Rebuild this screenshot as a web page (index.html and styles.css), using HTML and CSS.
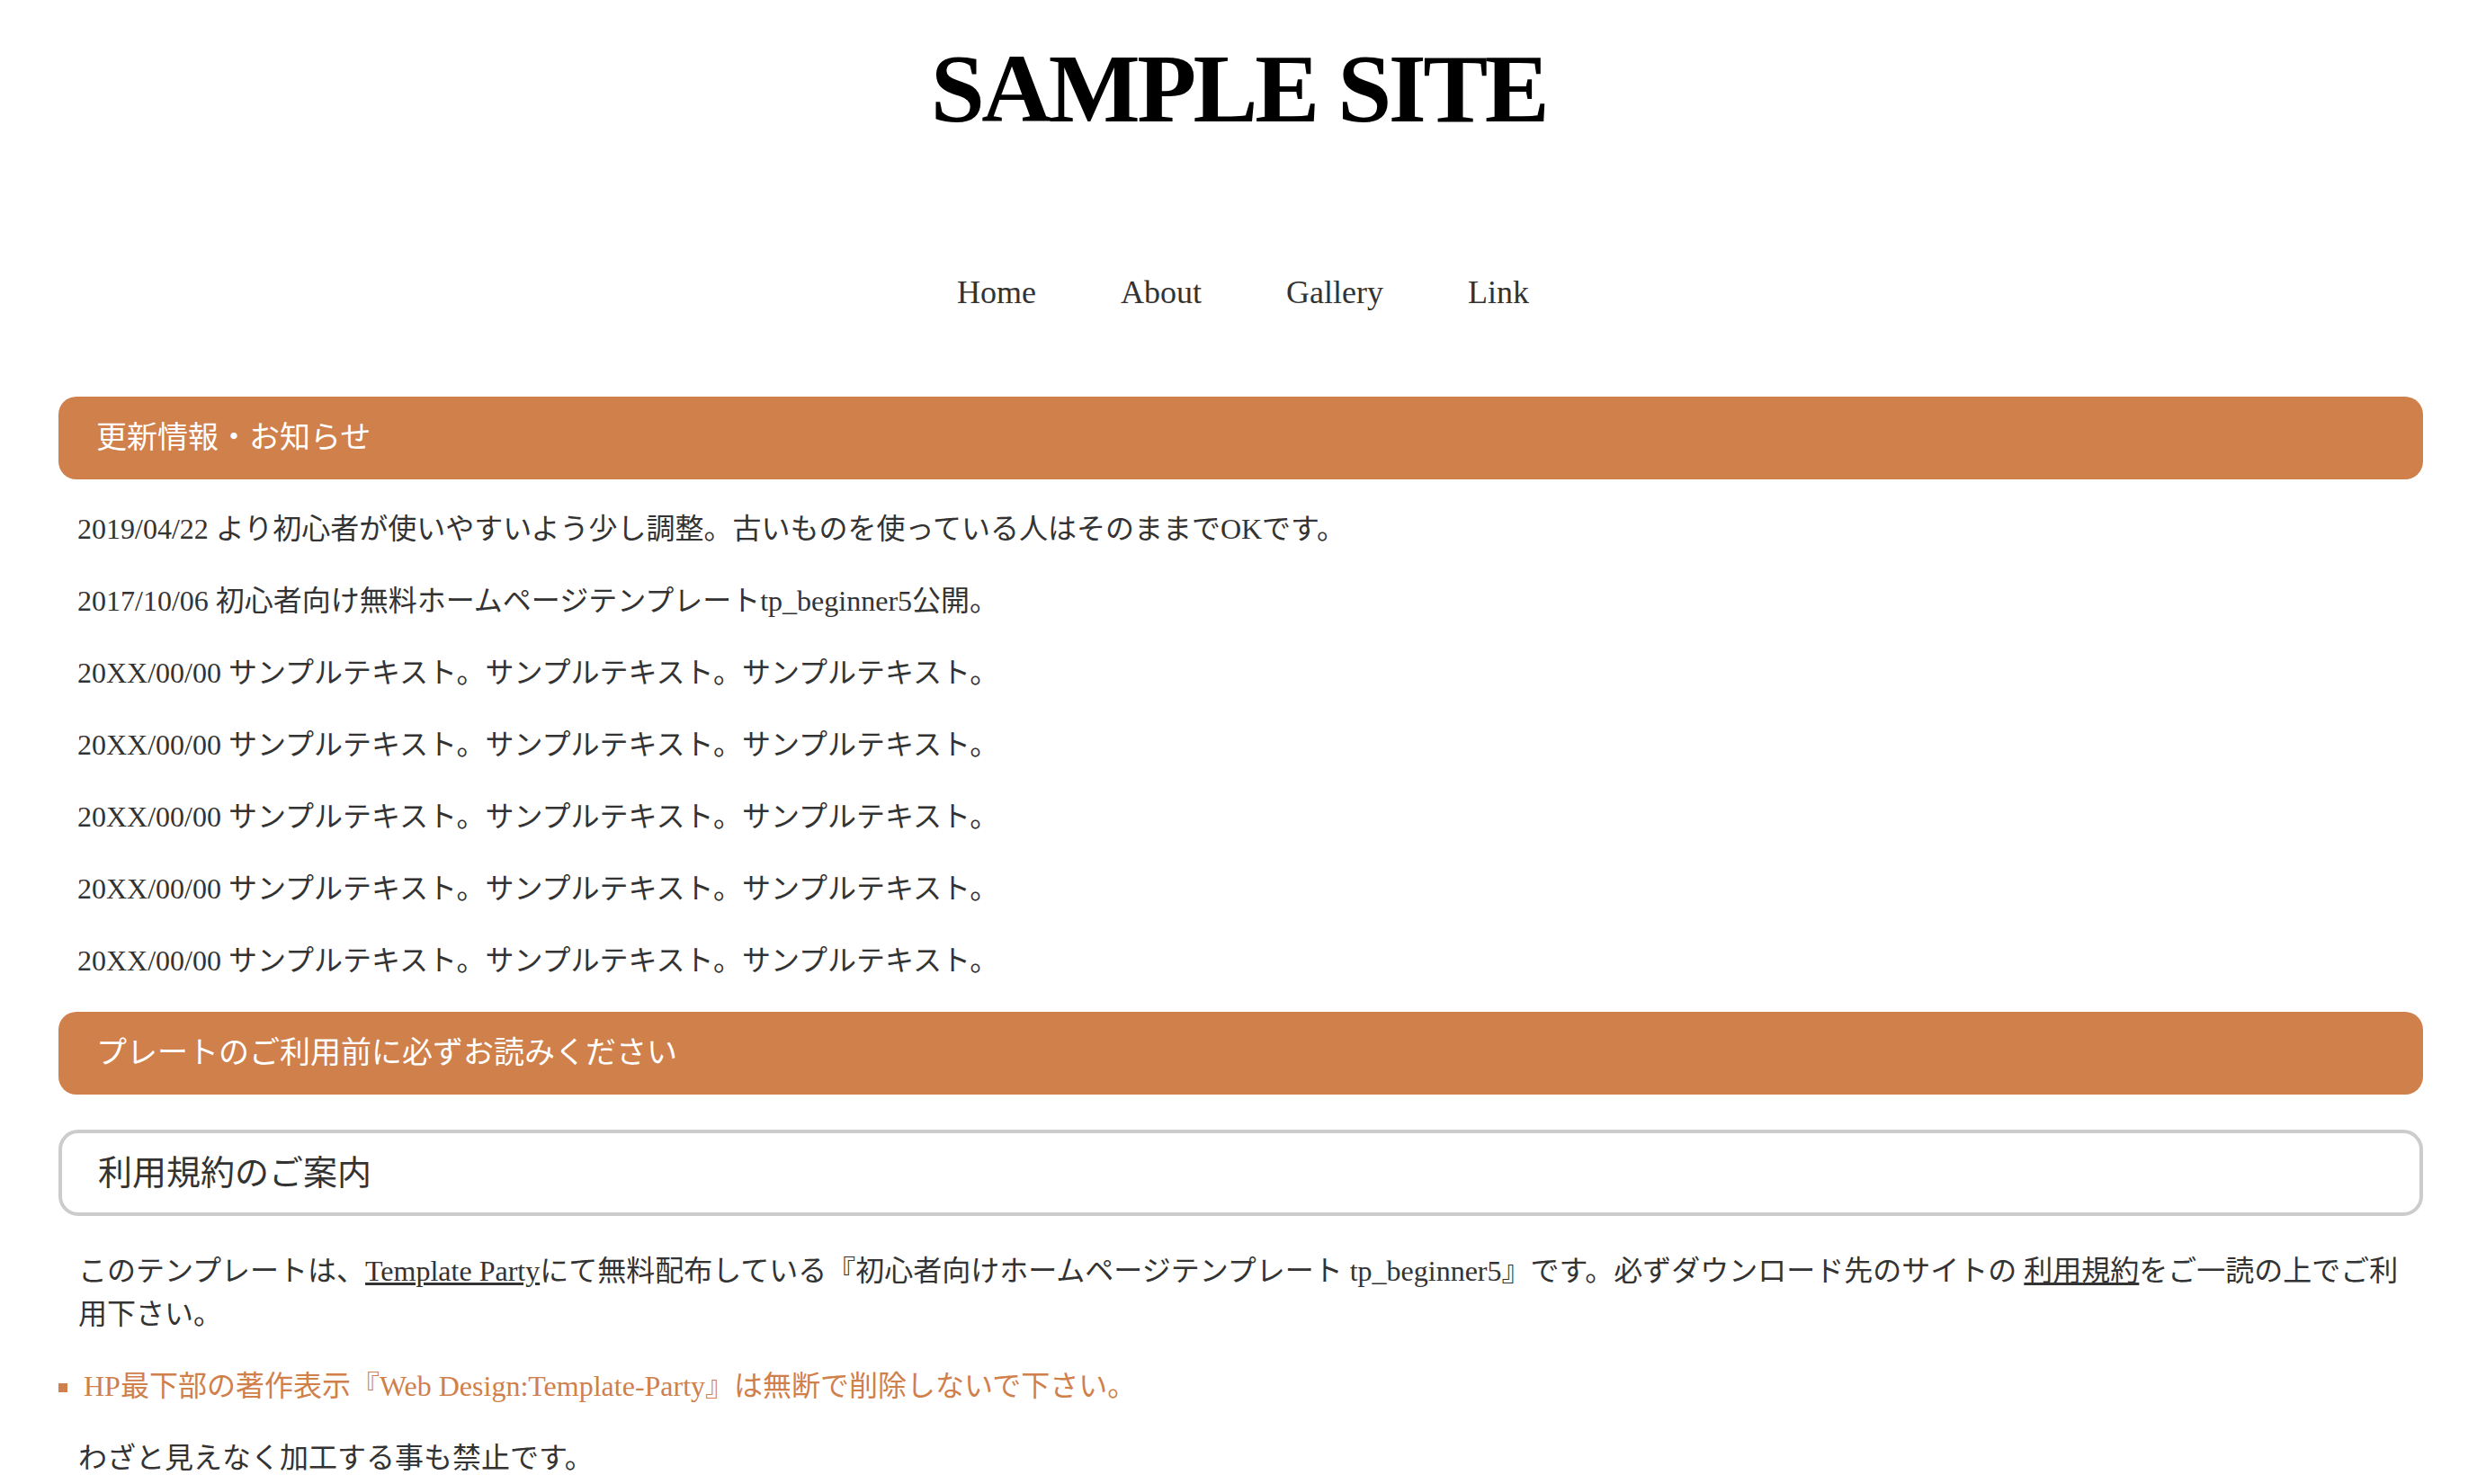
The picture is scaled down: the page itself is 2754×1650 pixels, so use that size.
FILE: index.html
```html
<!DOCTYPE html>
<html lang="ja">
<head>
<meta charset="utf-8">
<title>SAMPLE SITE</title>
<link rel="stylesheet" href="styles.css">
</head>
<body>
<header class="site-header">
  <h1 class="logo">SAMPLE SITE</h1>
  <nav class="global-nav">
    <ul>
      <li><a href="#">Home</a></li>
      <li><a href="#">About</a></li>
      <li><a href="#">Gallery</a></li>
      <li><a href="#">Link</a></li>
    </ul>
  </nav>
</header>
<main class="contents">
  <section class="section">
    <h2 class="bar">更新情報・お知らせ</h2>
    <ul class="news">
      <li>2019/04/22 より初心者が使いやすいよう少し調整。古いものを使っている人はそのままでOKです。</li>
      <li>2017/10/06 初心者向け無料ホームページテンプレートtp_beginner5公開。</li>
      <li>20XX/00/00 サンプルテキスト。サンプルテキスト。サンプルテキスト。</li>
      <li>20XX/00/00 サンプルテキスト。サンプルテキスト。サンプルテキスト。</li>
      <li>20XX/00/00 サンプルテキスト。サンプルテキスト。サンプルテキスト。</li>
      <li>20XX/00/00 サンプルテキスト。サンプルテキスト。サンプルテキスト。</li>
      <li>20XX/00/00 サンプルテキスト。サンプルテキスト。サンプルテキスト。</li>
    </ul>
  </section>
  <section class="section">
    <h2 class="bar">プレートのご利用前に必ずお読みください</h2>
    <h3 class="box-title">利用規約のご案内</h3>
    <p class="text">このテンプレートは、<a href="#">Template Party</a>にて無料配布している『初心者向けホームページテンプレート tp_beginner5』です。必ずダウンロード先のサイトの <a href="#">利用規約</a>をご一読の上でご利用下さい。</p>
    <p class="text warn">HP最下部の著作表示『Web Design:Template-Party』は無断で削除しないで下さい。</p>
    <p class="text last">わざと見えなく加工する事も禁止です。</p>
  </section>
</main>
</body>
</html>
```
FILE: styles.css
```css
html, body {
  margin: 0;
  padding: 0;
  background: #fff;
}

body {
  font-family: "Liberation Serif", "Noto Sans CJK JP", serif;
  color: #333;
}

.site-header {
  text-align: center;
}

.logo {
  margin: 0;
  padding-top: 45px;
  font-size: 108px;
  line-height: 108px;
  letter-spacing: -3.5px;
  font-weight: bold;
  color: #000;
}

.global-nav ul {
  display: flex;
  justify-content: center;
  gap: 94px;
  list-style: none;
  margin: 154px 0 0;
  padding: 0 0 0 10px;
  font-size: 36px;
  line-height: 36px;
}

.global-nav a {
  color: #333;
  text-decoration: none;
}

.contents {
  padding: 98px 60px 0 65px;
}

.section {
  margin: 0;
}

.bar {
  margin: 0;
  background: #d0804b;
  color: #fff;
  font-size: 34px;
  font-weight: normal;
  line-height: 52px;
  padding: 20px 42px;
  border-radius: 20px;
}

.news {
  list-style: none;
  margin: 0 0 17px;
  padding: 15px 0 0 21px;
  font-size: 32px;
}

.news li {
  line-height: 48px;
  padding: 16px 0;
}

.box-title {
  margin: 39px 0 37px;
  border: 4px solid #ccc;
  border-radius: 22px;
  padding: 18px 40px;
  font-size: 38px;
  line-height: 52px;
  font-weight: normal;
}

.text {
  font-size: 32px;
  line-height: 48px;
  margin: 0 10px 32px 22px;
}

.text a {
  color: #333;
  text-decoration: underline;
}

.warn {
  color: #d0804b;
  display: flex;
  align-items: flex-start;
  gap: 18px;
  margin-left: 0;
}

.warn::before {
  content: "";
  flex: none;
  width: 10px;
  height: 10px;
  margin-top: 21px;
  background: #d0804b;
}

.last {
  margin-bottom: 0;
}
```
